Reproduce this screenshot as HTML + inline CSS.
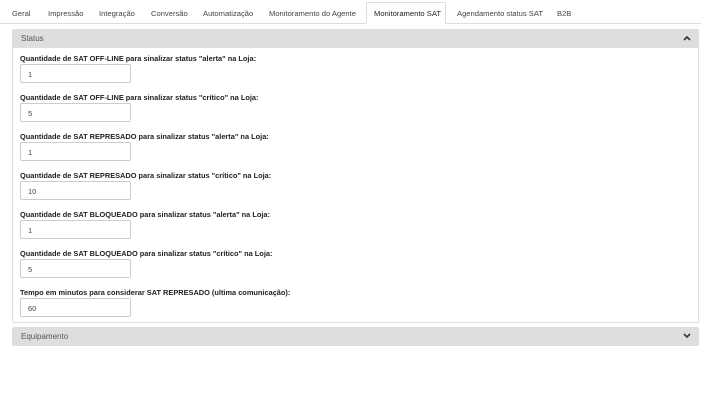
<!DOCTYPE html>
<html><head><style>
body{margin:0;width:701px;height:403px;background:#fff;font-family:"Liberation Sans",sans-serif;font-size:8px;color:#333;position:relative;overflow:hidden}
.t{position:absolute;top:9px;font-size:7.6px;color:#444;white-space:nowrap}
.line{position:absolute;left:0;top:23px;width:701px;height:1px;background:#ddd}
.act{position:absolute;left:366px;top:2px;width:80px;height:22px;border:1px solid #ddd;border-bottom:1px solid #fff;background:#fff;box-sizing:border-box}
.panel{position:absolute;left:12px;top:29px;width:687px;height:294px;border:1px solid #ddd;box-sizing:border-box;border-radius:2px}
.hd{position:absolute;left:12px;width:687px;height:19px;background:#dedede;border-radius:2px}
.hd span{position:absolute;left:9px;top:5px;color:#555}
.hd svg{position:absolute;right:8px;top:6px}
.lb{position:absolute;left:20px;font-weight:bold;font-size:7.4px;color:#222;white-space:nowrap}
.in{position:absolute;left:20px;width:111px;height:19px;border:1px solid #ccc;border-radius:2px;box-sizing:border-box;padding:5px 0 0 7px;font-size:7.5px;color:#444}
</style></head><body>
<div class="line"></div>
<div class="act"></div>
<div class="t" style="left:12px">Geral</div>
<div class="t" style="left:48px">Impressão</div>
<div class="t" style="left:99px">Integração</div>
<div class="t" style="left:151px">Conversão</div>
<div class="t" style="left:203px">Automatização</div>
<div class="t" style="left:269px">Monitoramento do Agente</div>
<div class="t" style="left:374px;color:#222">Monitoramento SAT</div>
<div class="t" style="left:457px">Agendamento status SAT</div>
<div class="t" style="left:557px">B2B</div>
<div class="panel"></div>
<div class="hd" style="top:29px"><span>Status</span><svg width="8" height="6" viewBox="0 0 8 6"><path d="M1 5L4 2L7 5" fill="none" stroke="#333" stroke-width="1.6"/></svg></div>
<div class="lb" style="top:54px">Quantidade de SAT OFF-LINE para sinalizar status "alerta" na Loja:</div>
<div class="in" style="top:64px">1</div>
<div class="lb" style="top:93px">Quantidade de SAT OFF-LINE para sinalizar status "crítico" na Loja:</div>
<div class="in" style="top:103px">5</div>
<div class="lb" style="top:132px">Quantidade de SAT REPRESADO para sinalizar status "alerta" na Loja:</div>
<div class="in" style="top:142px">1</div>
<div class="lb" style="top:171px">Quantidade de SAT REPRESADO para sinalizar status "crítico" na Loja:</div>
<div class="in" style="top:181px">10</div>
<div class="lb" style="top:210px">Quantidade de SAT BLOQUEADO para sinalizar status "alerta" na Loja:</div>
<div class="in" style="top:220px">1</div>
<div class="lb" style="top:249px">Quantidade de SAT BLOQUEADO para sinalizar status "crítico" na Loja:</div>
<div class="in" style="top:259px">5</div>
<div class="lb" style="top:288px">Tempo em minutos para considerar SAT REPRESADO (ultima comunicação):</div>
<div class="in" style="top:298px">60</div>
<div class="hd" style="top:327px"><span>Equipamento</span><svg width="8" height="6" viewBox="0 0 8 6"><path d="M1 1L4 4L7 1" fill="none" stroke="#333" stroke-width="1.6"/></svg></div>
</body></html>
